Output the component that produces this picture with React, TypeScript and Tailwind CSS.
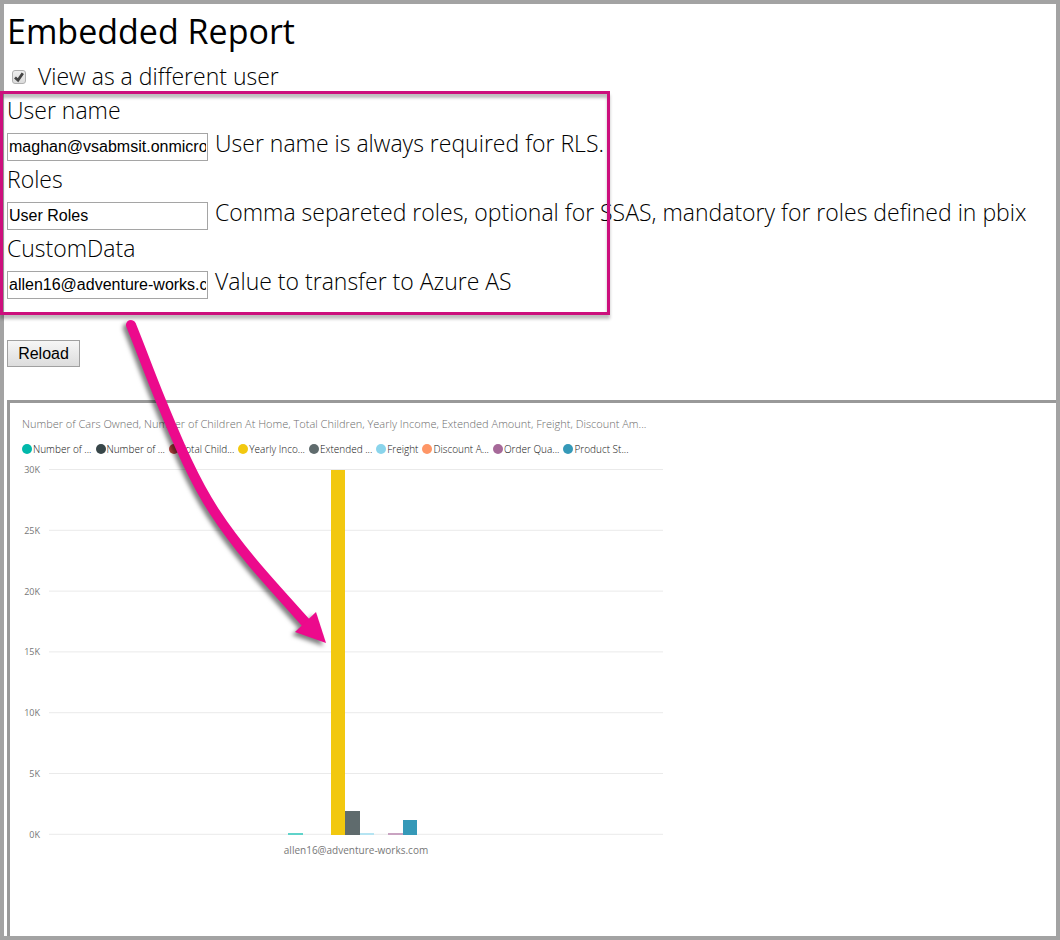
import { useState } from "react";

type Field = { id: string; label: string; value: string; hint: string };

const fields: Field[] = [
  { id: "user-name", label: "User name", value: "maghan@vsabmsit.onmicrosoft.com", hint: "User name is always required for RLS." },
  { id: "roles", label: "Roles", value: "User Roles", hint: "Comma separeted roles, optional for SSAS, mandatory for roles defined in pbix" },
  { id: "custom-data", label: "CustomData", value: "allen16@adventure-works.com", hint: "Value to transfer to Azure AS" },
];

const legend = [
  { label: "Number of ...", color: "#01b8aa" },
  { label: "Number of ...", color: "#374649" },
  { label: "Total Child...", color: "#b5423f" },
  { label: "Yearly Inco...", color: "#f2c80f" },
  { label: "Extended ...", color: "#5f6b6d" },
  { label: "Freight", color: "#8ad4eb" },
  { label: "Discount A...", color: "#fe9666" },
  { label: "Order Qua...", color: "#a66999" },
  { label: "Product St...", color: "#3599b8" },
];

const ticks = ["30K", "25K", "20K", "15K", "10K", "5K", "0K"];

const bars = [
  { x: 278, w: 15, h: 2, color: "#5fd3ca" },
  { x: 321, w: 14, h: 365, color: "#f2c80f" },
  { x: 335, w: 15, h: 24, color: "#5f6b6d" },
  { x: 350, w: 14, h: 2, color: "#b5e4f2" },
  { x: 378, w: 15, h: 2, color: "#c9a3c1" },
  { x: 393, w: 14, h: 15, color: "#3599b8" },
];

function FieldRow({ field }: { field: Field }) {
  const [value, setValue] = useState(field.value);
  return (
    <div>
      <label htmlFor={field.id} className="block h-[35px] leading-[34px]">
        {field.label}
      </label>
      <div className="flex h-[34px] items-start gap-[7px]">
        <input
          id={field.id}
          type="text"
          value={value}
          onChange={(e) => setValue(e.target.value)}
          className="mt-[5px] h-7 w-[201px] shrink-0 border border-[#a5a5a5] bg-white px-px font-['Liberation_Sans',sans-serif] text-base text-black outline-none"
        />
        <span className="leading-[30px] whitespace-nowrap">{field.hint}</span>
      </div>
    </div>
  );
}

function Callout() {
  return (
    <svg
      aria-hidden="true"
      className="pointer-events-none absolute top-56 left-[105px] z-10"
      width="230"
      height="350"
      viewBox="112 315 230 350"
      style={{ filter: "drop-shadow(-3px 3px 2px rgba(0,0,0,.5))" }}
    >
      <path
        d="M131 325 C142 352 152 380 163 406 C180 447 194 480 214 511 C240 551 270 583 308 625"
        fill="none"
        stroke="#ec0a8c"
        strokeWidth="10"
        strokeLinecap="round"
      />
      <path d="M326 643 L316 612 L295 632 Z" fill="#ec0a8c" />
    </svg>
  );
}

function Chart() {
  return (
    <section className="w-[660px] pt-[11px] pl-3 font-['Open_Sans',sans-serif]" aria-label="Report chart">
      <h2 className="text-[11px] leading-5 font-light whitespace-nowrap text-[#6c6c6c]">
        Number of Cars Owned, Number of Children At Home, Total Children, Yearly Income, Extended Amount, Freight, Discount Am...
      </h2>
      <ul className="mt-[7px] flex h-4 items-center gap-1 text-[10px] leading-4 font-light whitespace-nowrap text-[#111]">
        {legend.map((item, i) => (
          <li key={i} className="flex items-center gap-px">
            <svg width="10" height="10" aria-hidden="true">
              <circle cx="5" cy="5" r="5" fill={item.color} />
            </svg>
            {item.label}
          </li>
        ))}
      </ul>
      <svg width="660" height="410" viewBox="0 0 660 410" className="-ml-3 block" role="img" aria-label="Values for allen16@adventure-works.com">
        {ticks.map((t, i) => (
          <g key={t}>
            <line x1="39" x2="653" y1={12.5 + i * 60.8} y2={12.5 + i * 60.8} stroke="#eaeaea" />
            <text x="30" y={16 + i * 60.8} textAnchor="end" fontSize="9" fill="#777">
              {t}
            </text>
          </g>
        ))}
        {bars.map((b) => (
          <rect key={b.x} x={b.x} y={378 - b.h} width={b.w} height={b.h} fill={b.color} />
        ))}
        <text x="346" y="397" textAnchor="middle" fontSize="10" fill="#777">
          allen16@adventure-works.com
        </text>
      </svg>
    </section>
  );
}

export default function App() {
  const [different, setDifferent] = useState(true);
  return (
    <main className="flex min-h-screen flex-col border-4 border-[#a3a3a3] bg-white pl-[3px] font-['Open_Sans','Noto_Sans',sans-serif] text-[23px] font-light text-black">
      <h1 className="h-14 text-[34px] leading-[54px] font-normal">Embedded Report</h1>
      <label className="flex h-[31px] items-center gap-3 pt-0.5 pl-[5px]">
        <span className="relative flex size-[14px]">
          <input
            type="checkbox"
            checked={different}
            onChange={(e) => setDifferent(e.target.checked)}
            className="size-[14px] appearance-none rounded-[3px] border border-[#b0b0b0] bg-linear-to-b from-[#eeeeee] to-[#dcdcdc]"
          />
          {different && (
            <svg className="pointer-events-none absolute inset-0" width="14" height="14" viewBox="0 0 14 14" aria-hidden="true">
              <path d="M3 7.5 L6 10.2 L10.8 3.2" fill="none" stroke="#444" strokeWidth="2.8" />
            </svg>
          )}
        </span>
        View as a different user
      </label>
      <div className="relative h-[224px] pt-[2px]">
        {fields.map((f) => (
          <FieldRow key={f.id} field={f} />
        ))}
        <div
          aria-hidden="true"
          className="pointer-events-none absolute top-0 -left-[7px] h-[224px] w-[610px] border-[3px] border-[#cc0f7c] shadow-[0_4px_3px_rgba(0,0,0,0.25),inset_0_4px_3px_rgba(0,0,0,0.25)]"
        />
        <Callout />
      </div>
      <button
        type="button"
        className="mt-[25px] h-[27px] w-[73px] border border-[#a0a0a0] bg-linear-to-b from-[#f6f6f6] to-[#dddddd] font-['Liberation_Sans',sans-serif] text-base leading-6 font-normal"
      >
        Reload
      </button>
      <div className="mt-[33px] flex-1 border-t-[3px] border-l-[3px] border-[#999] font-normal">
        <Chart />
      </div>
    </main>
  );
}
